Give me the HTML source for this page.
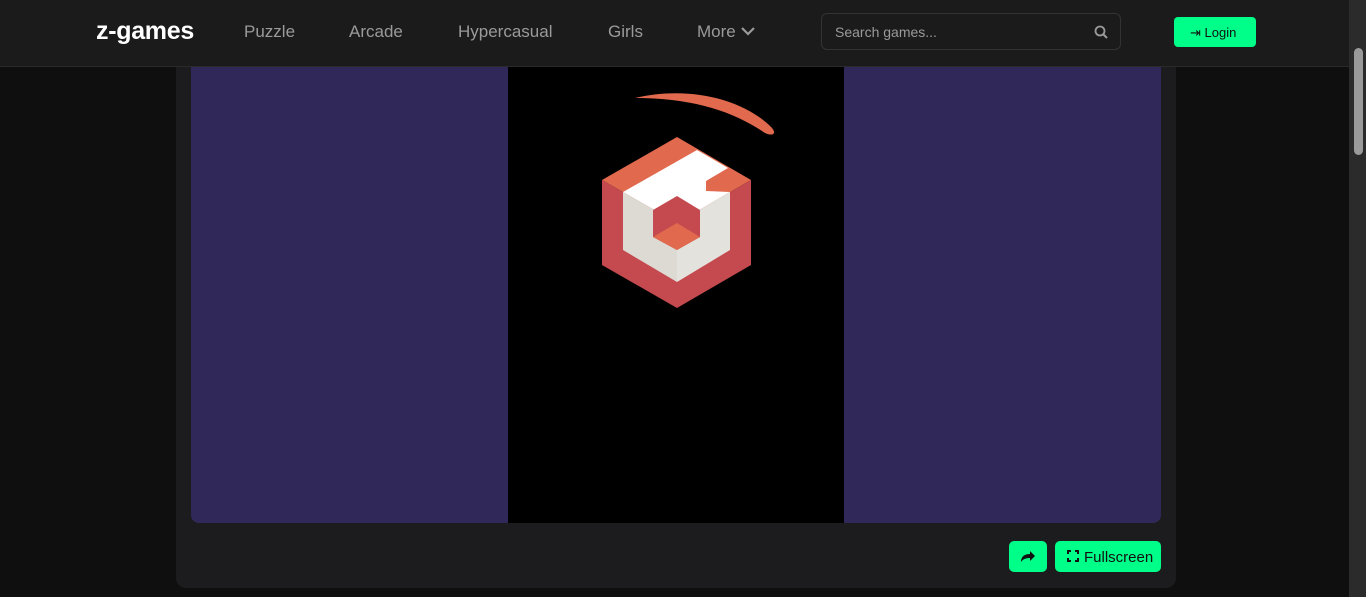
<!DOCTYPE html>
<html><head><style>
*{margin:0;padding:0;box-sizing:border-box}
body{width:1366px;height:597px;overflow:hidden;background:#0f0f10;font-family:"Liberation Sans",sans-serif;position:relative}
.hdr{position:absolute;left:0;top:0;width:1349px;height:67px;background:#1b1b1c;border-bottom:1px solid #2a2a2a}
.logo{position:absolute;left:96px;top:17px;color:#fff;font-weight:bold;font-size:25px;letter-spacing:-0.3px}
.nav{position:absolute;top:22px;color:#9a9a9a;font-size:17px}
.search{position:absolute;left:821px;top:13px;width:300px;height:37px;border:1px solid #333;border-radius:6px;background:#1b1b1c;color:#9a9a9a;font-size:14px;padding:10px 13px}
.login{position:absolute;left:1174px;top:17px;width:82px;height:30px;background:#00ff88;border-radius:4px;font-size:13px;color:#111;padding:8px 0 0 16px}
.card{position:absolute;left:176px;top:40px;width:1000px;height:548px;background:#1c1c1e;border-radius:10px}
.game{position:absolute;left:191px;top:60px;width:970px;height:463px;background:#302859;border-radius:8px;overflow:hidden}
.blk{position:absolute;left:317px;top:0;width:336px;height:463px;background:#000}
.btn{position:absolute;top:541px;height:31px;background:#00ff88;border-radius:5px;color:#111;font-size:15px}
.sb{position:absolute;left:1349px;top:0;width:17px;height:597px;background:#2b2b2b}
.th{position:absolute;left:1354px;top:48px;width:9px;height:107px;background:#9a9a9a;border-radius:5px}
</style></head><body>
<div class="card"></div>
<div class="game"><div class="blk"></div></div>
<svg style="position:absolute;left:0;top:0" width="1366" height="597">
<path d="M635 98 C690 85 745 100 772 128 C778 135 770 137 762 131 C730 110 690 98 635 98Z" fill="#e0694e"/>
<polygon points="677,137 751,180 677,223 602,180" fill="#e0694e"/>
<polygon points="602,180 677,223 677,308 602,265" fill="#c44a4f"/>
<polygon points="677,223 751,180 751,265 677,308" fill="#c44a4f"/>
<polygon points="623,192 697,150 728,168 706,181 706,191 730,192 677,223" fill="#fff"/>
<polygon points="623,192 677,223 677,282 623,250" fill="#dddad3"/>
<polygon points="677,223 730,192 730,250 677,282" fill="#e4e2dd"/>
<polygon points="677,196 700,210 700,237 677,250 653,237 653,210" fill="#c44a4f"/>
<polygon points="653,237 677,223 700,237 677,250" fill="#e0694e"/>
</svg>
<div class="hdr">
<div class="logo">z-games</div>
<div class="nav" style="left:244px">Puzzle</div>
<div class="nav" style="left:349px">Arcade</div>
<div class="nav" style="left:458px">Hypercasual</div>
<div class="nav" style="left:608px">Girls</div>
<div class="nav" style="left:697px">More <svg width="16" height="12" viewBox="0 0 16 12"><path d="M2 3l6 6 6-6" stroke="#9a9a9a" stroke-width="2.2" fill="none"/></svg></div>
<div class="search">Search games...<svg style="position:absolute;right:12px;top:11px" width="14" height="14" viewBox="0 0 14 14"><circle cx="6" cy="6" r="4.5" stroke="#9a9a9a" stroke-width="1.8" fill="none"/><path d="M9.5 9.5l3.5 3.5" stroke="#9a9a9a" stroke-width="2"/></svg></div>
<div class="login">⇥ Login</div>
</div>
<div class="btn" style="left:1009px;width:38px"><svg style="position:absolute;left:11px;top:9px" width="16" height="13" viewBox="0 0 16 13"><path d="M1 12 C1 6 5 4 10 4 V1 L15 6 L10 11 V8 C6 8 3 9 1 12Z" fill="#111"/></svg></div>
<div class="btn" style="left:1055px;width:106px;padding:8px 0 0 29px">Fullscreen<svg style="position:absolute;left:12px;top:9px" width="12" height="12" viewBox="0 0 12 12"><path d="M1 4V1h3M8 1h3v3M11 8v3H8M4 11H1V8" stroke="#111" stroke-width="2" fill="none"/></svg></div>
<div class="sb"></div><div class="th"></div>
</body></html>
